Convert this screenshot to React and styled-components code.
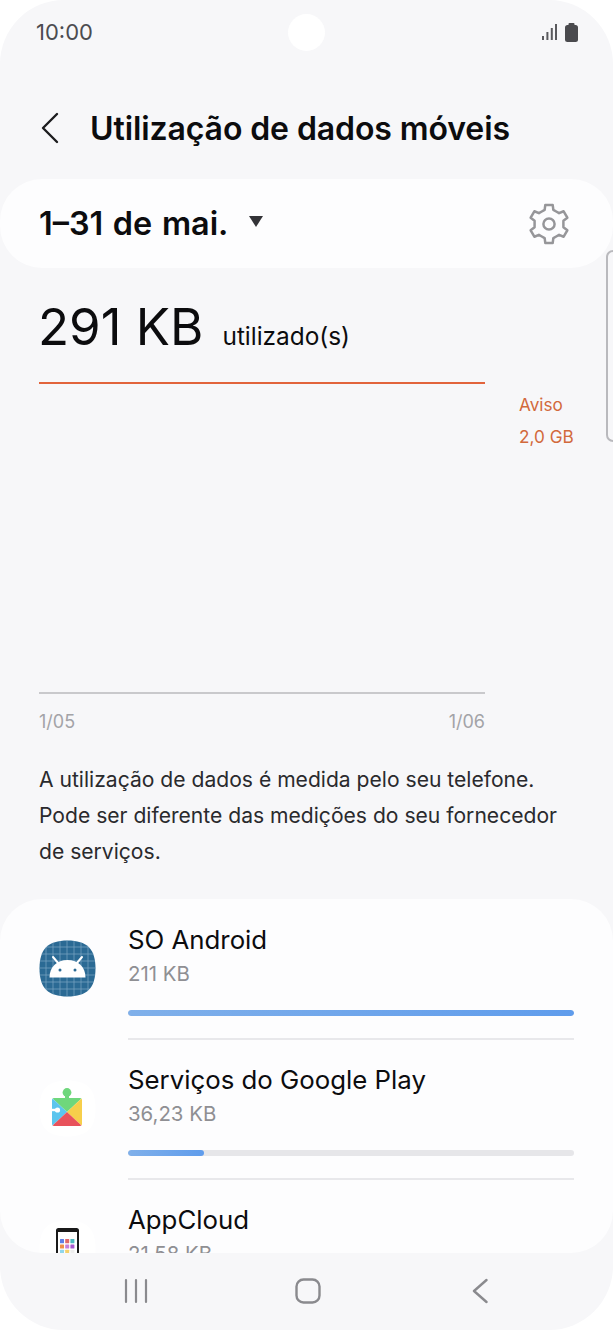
import React from 'react';
import styled, { createGlobalStyle } from 'styled-components';

const GlobalStyle = createGlobalStyle`
  html, body {
    margin: 0;
    background: #fff;
  }
`;

const apps = [
  { name: 'SO Android', size: '211 KB', usage: 100, icon: 'android' },
  { name: 'Serviços do Google Play', size: '36,23 KB', usage: 17, icon: 'play' },
  { name: 'AppCloud', size: '21,58 KB', usage: 10, icon: 'cloud' },
];

// six tooth gear, pointy side up
const gearPoints = () => {
  const pts = [];
  for (let i = 0; i < 6; i++) {
    const a = -90 + i * 60;
    [[-30, 14.4], [-17, 14.8], [-11, 19.4], [11, 19.4], [17, 14.8]].forEach(([d, r]) => {
      const t = ((a + d) * Math.PI) / 180;
      pts.push(`${(24 + r * Math.cos(t)).toFixed(2)},${(24 + r * Math.sin(t)).toFixed(2)}`);
    });
  }
  return pts.join(' ');
};

const Squircle = 'M28.5 0.5C48 0.5 56.5 9 56.5 28.5S48 56.5 28.5 56.5S0.5 48 0.5 28.5S9 0.5 28.5 0.5Z';

const AndroidIcon = () => (
  <svg width="57" height="57" viewBox="0 0 57 57">
    <clipPath id="android-clip"><path d={Squircle} /></clipPath>
    <path d={Squircle} fill="#2b6a94" />
    <g clipPath="url(#android-clip)" stroke="#7ba8c4" strokeWidth="0.7">
      {[7, 14, 21, 28, 35, 42, 49].map((p) => (
        <React.Fragment key={p}>
          <line x1={p} y1="0" x2={p} y2="57" />
          <line x1="0" y1={p} x2="57" y2={p} />
        </React.Fragment>
      ))}
    </g>
    <path d="M10.5 37.5C10.5 27 18 20 28.5 20S46.5 27 46.5 37.5Z" fill="#fff" />
    <path d="M14 17L19.5 23.5M43 17L37.5 23.5" stroke="#fff" strokeWidth="2" strokeLinecap="round" />
    <circle cx="21" cy="30" r="1.5" fill="#2b6a94" />
    <circle cx="36" cy="30" r="1.5" fill="#2b6a94" />
  </svg>
);

const PlayIcon = () => (
  <svg width="57" height="57" viewBox="0 0 57 57">
    <path d={Squircle} fill="#fff" />
    <clipPath id="play-clip"><rect x="13" y="18" width="30" height="28" rx="2" /></clipPath>
    <circle cx="28" cy="12.5" r="4.4" fill="#6fd77c" />
    <rect x="26" y="14" width="4" height="5" fill="#6fd77c" />
    <g clipPath="url(#play-clip)">
      <path d="M13 18H43L28 32Z" fill="#6fd77c" />
      <path d="M13 18L28 32L13 46Z" fill="#5cc5ee" />
      <path d="M43 18V46L28 32Z" fill="#f7cf4b" />
      <path d="M13 46H43L28 32Z" fill="#e8525b" />
    </g>
    <circle cx="18.5" cy="30" r="2.6" fill="#fff" />
    <rect x="12" y="28.8" width="6" height="2.4" fill="#fff" />
  </svg>
);

const cloudCells = ['#5f7fe8', '#e0686a', '#4db8c0', '#ee8f4a', '#c77fd8', '#a85ad0', '#8fd6ec', '#f5d06a', '#eeeeee'];

const CloudIcon = () => (
  <svg width="57" height="57" viewBox="0 0 57 57">
    <path d={Squircle} fill="#fff" />
    <rect x="18" y="9" width="21" height="46" rx="1.5" fill="#fff" stroke="#1a1a1a" strokeWidth="2" />
    <rect x="18" y="9" width="21" height="3" fill="#1a1a1a" />
    {cloudCells.map((c, i) => (
      <rect key={c} x={21 + (i % 3) * 5.2} y={19 + Math.floor(i / 3) * 5.4} width="4" height="4.2" rx="0.5" fill={c} />
    ))}
  </svg>
);

const icons = { android: AndroidIcon, play: PlayIcon, cloud: CloudIcon };

const App = () => (
  <>
    <GlobalStyle />
    <Phone>
      <StatusBar>
        <Clock>10:00</Clock>
        <StatusIcons>
          <svg width="15" height="18" viewBox="0 0 15 18" fill="#5a5a5e">
            <rect x="0" y="13" width="2" height="4" />
            <rect x="4.4" y="9" width="2" height="8" />
            <rect x="8.8" y="5" width="2" height="12" />
            <rect x="13" y="1" width="2" height="16" />
          </svg>
          <svg width="13" height="19" viewBox="0 0 13 19" fill="#4a4a4e">
            <rect x="3.5" y="0" width="6" height="3" rx="1" />
            <rect x="0" y="2" width="13" height="17" rx="2.5" />
          </svg>
        </StatusIcons>
      </StatusBar>
      <Camera />
      <Header>
        <svg width="19" height="32" viewBox="0 0 19 32" fill="none">
          <path d="M17 2L3 16L17 30" stroke="#1c1c1e" strokeWidth="2.4" strokeLinecap="round" strokeLinejoin="round" />
        </svg>
        <Title>Utilização de dados móveis</Title>
      </Header>
      <PeriodCard>
        <Period>
          1–31 de mai.
          <Caret />
        </Period>
        <svg width="48" height="48" viewBox="0 0 48 48" fill="none" stroke="#969699" strokeWidth="2.5" strokeLinejoin="round">
          <polygon points={gearPoints()} />
          <circle cx="24" cy="24" r="5.6" />
        </svg>
      </PeriodCard>
      <Summary>
        <Amount>291 KB</Amount>
        <AmountLabel>utilizado(s)</AmountLabel>
      </Summary>
      <Chart>
        <Plot />
        <Warning>
          Aviso
          <br />
          2,0 GB
        </Warning>
        <Axis>
          <span>1/05</span>
          <span>1/06</span>
        </Axis>
      </Chart>
      <Note>
        A utilização de dados é medida pelo seu telefone. Pode ser diferente das medições do seu fornecedor de serviços.
      </Note>
      <AppList>
        {apps.map((app, i) => {
          const Icon = icons[app.icon];
          return (
            <AppRow key={app.name}>
              <IconSlot>
                <Icon />
              </IconSlot>
              <AppBody $last={i === apps.length - 1}>
                <AppName>{app.name}</AppName>
                <AppSize>{app.size}</AppSize>
                <Track>
                  <Fill style={{ width: `${app.usage}%` }} />
                </Track>
              </AppBody>
            </AppRow>
          );
        })}
      </AppList>
      <NavBar>
        <svg width="24" height="26" viewBox="0 0 24 26" fill="none" stroke="#8a8a8e" strokeWidth="2.2" strokeLinecap="round">
          <path d="M2 2V24M12 2V24M22 2V24" />
        </svg>
        <svg width="26" height="26" viewBox="0 0 26 26" fill="none" stroke="#8a8a8e" strokeWidth="2.4">
          <rect x="1.5" y="1.5" width="23" height="23" rx="7" />
        </svg>
        <svg width="16" height="26" viewBox="0 0 16 26" fill="none" stroke="#8a8a8e" strokeWidth="2.4" strokeLinecap="round" strokeLinejoin="round">
          <path d="M14.5 2L2 13L14.5 24" />
        </svg>
      </NavBar>
      <ScrollHandle />
    </Phone>
  </>
);

const Phone = styled.div`
  position: relative;
  width: 613px;
  height: 1330px;
  display: flex;
  flex-direction: column;
  overflow: hidden;
  border-radius: 64px;
  background: #f7f7f9;
  font-family: Inter, 'Noto Sans', sans-serif;
  color: #0c0c0e;
`;

const StatusBar = styled.div`
  height: 64px;
  flex: none;
  box-sizing: border-box;
  padding: 0 35px 0 36px;
  display: flex;
  align-items: center;
  justify-content: space-between;
`;

const Clock = styled.span`
  font-size: 22px;
  font-weight: 400;
  color: #4c4c50;
`;

const StatusIcons = styled.div`
  display: flex;
  align-items: center;
  gap: 8px;
`;

const Camera = styled.div`
  position: absolute;
  left: 288px;
  top: 14px;
  width: 37px;
  height: 37px;
  border-radius: 50%;
  background: #fff;
`;

const Header = styled.header`
  height: 115px;
  flex: none;
  box-sizing: border-box;
  padding: 13px 0 0 40px;
  display: flex;
  align-items: center;
  gap: 31px;
`;

const Title = styled.h1`
  margin: 0;
  font-size: 32px;
  font-weight: 600;
  letter-spacing: -0.1px;
`;

const PeriodCard = styled.div`
  height: 89px;
  flex: none;
  box-sizing: border-box;
  padding: 0 40px 0 39px;
  display: flex;
  align-items: center;
  justify-content: space-between;
  border-radius: 42px;
  background: #fdfdfe;
`;

const Period = styled.div`
  display: flex;
  align-items: center;
  gap: 21px;
  font-size: 32.4px;
  font-weight: 600;
  word-spacing: 1.5px;
`;

const Caret = styled.span`
  width: 0;
  height: 0;
  margin-bottom: 4px;
  border-left: 7.5px solid transparent;
  border-right: 7.5px solid transparent;
  border-top: 11px solid #333337;
`;

const Summary = styled.div`
  height: 114px;
  flex: none;
  box-sizing: border-box;
  padding: 28px 0 0 38px;
  display: flex;
  align-items: baseline;
  gap: 19px;
`;

const Amount = styled.span`
  font-size: 51px;
  font-weight: 400;
`;

const AmountLabel = styled.span`
  font-size: 24.4px;
`;

const Chart = styled.div`
  flex: none;
  padding-left: 39px;
  display: grid;
  grid-template-columns: 446px 1fr;
  grid-template-rows: 312px auto;
`;

const Plot = styled.div`
  border-top: 2px solid #e2643c;
  border-bottom: 2px solid #c9c9cc;
`;

const Warning = styled.div`
  padding: 7px 0 0 34px;
  font-size: 17.2px;
  line-height: 32px;
  color: #d2693c;
`;

const Axis = styled.div`
  display: flex;
  justify-content: space-between;
  padding-top: 15px;
  font-size: 18px;
  line-height: 26px;
  color: #a3a3a7;
`;

const Note = styled.p`
  flex: none;
  margin: 0;
  padding: 27px 39px 29px;
  font-size: 21.1px;
  line-height: 36px;
  color: #2a2a2d;
`;

const AppList = styled.div`
  flex: 1;
  min-height: 0;
  padding-top: 1px;
  overflow: hidden;
  border-radius: 42px;
  background: #fdfdfe;
`;

const AppRow = styled.div`
  display: flex;
  padding-left: 39px;
`;

const IconSlot = styled.div`
  width: 89px;
  flex: none;
  padding-top: 40px;
`;

const AppBody = styled.div`
  flex: 1;
  margin-right: 39px;
  height: 140px;
  box-sizing: border-box;
  padding-top: 23px;
  border-bottom: ${(p) => (p.$last ? 'none' : '2px solid #e8e8eb')};
`;

const AppName = styled.div`
  font-size: 25.8px;
  line-height: 34px;
`;

const AppSize = styled.div`
  margin-top: 3px;
  font-size: 20.4px;
  line-height: 28px;
  color: #8f8f93;
`;

const Track = styled.div`
  height: 6px;
  margin-top: 22px;
  border-radius: 3px;
  background: #e6e6e9;
  overflow: hidden;
`;

const Fill = styled.div`
  height: 100%;
  border-radius: 3px;
  background: linear-gradient(90deg, #80b0ea, #5f9cec);
`;

const NavBar = styled.nav`
  height: 77px;
  flex: none;
  box-sizing: border-box;
  padding: 0 0 1px 3px;
  display: grid;
  grid-template-columns: repeat(3, 172px);
  justify-content: center;
  justify-items: center;
  align-items: center;
`;

const ScrollHandle = styled.div`
  position: absolute;
  right: -8px;
  top: 250px;
  width: 11px;
  height: 188px;
  border: 2px solid #b9b9bd;
  border-radius: 7px;
`;

export default App;
